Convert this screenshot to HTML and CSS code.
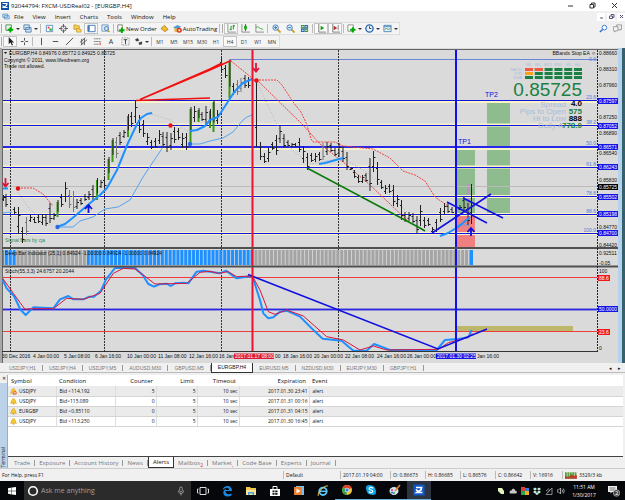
FILE: index.html
```html
<!DOCTYPE html>
<html lang="en">
<head>
<meta charset="utf-8">
<title>92044794: FXCM-USDReal02 - [EURGBP,H4]</title>
<link rel="stylesheet" href="styles.css">
</head>
<body>
<header class="titlebar">
  <svg class="logo" viewBox="0 0 16 16"><rect width="16" height="16" fill="#0a50a8"/><path d="M3 3h9l-1 4-6 4h8M3 7l4 5" fill="none" stroke="#fff" stroke-width="2.4"/></svg>
  <span class="title">92044794: FXCM-USDReal02 - [EURGBP,H4]</span>
  <div class="winctl">
    <button aria-label="Minimize"><svg viewBox="0 0 7 7"><path d="M1 4h5"/></svg></button>
    <button aria-label="Restore"><svg viewBox="0 0 7 7"><path d="M1 2.5h3.5V6H1zM2.5 2V1H6v4H5"/></svg></button>
    <button aria-label="Close"><svg viewBox="0 0 7 7"><path d="M1 1l5 5M6 1L1 6"/></svg></button>
  </div>
</header>
<nav class="menubar">
  <svg class="menuicon" viewBox="0 0 10 8"><path d="M1 1h6v4H1zM3 3h6v4H3z" fill="#dceaf8" stroke="#5590c8"/></svg>
  <button>File</button><button>View</button><button>Insert</button><button>Charts</button><button>Tools</button><button>Window</button><button>Help</button>
  <div class="mdictl">
    <button aria-label="Minimize chart"><svg viewBox="0 0 7 7"><path d="M2 5h3"/></svg></button>
    <button aria-label="Restore chart"><svg viewBox="0 0 7 7"><path d="M1.5 3h3v2.5h-3zM3 2.5v-1h3v3H5"/></svg></button>
    <button aria-label="Close chart"><svg viewBox="0 0 7 7"><path d="M2 2l3 3M5 2L2 5"/></svg></button>
  </div>
</nav>
<div class="toolbar">
  <div class="group">
    <i class="grip"></i>
    <button class="drop" aria-label="New chart"><svg viewBox="0 0 10 10"><path d="M1 1h6v6H1z" fill="#eef6ee" stroke="#4a8a4a"/><path d="M6 3.5v6M3 6.5h6" stroke="#0a0" stroke-width="2.2"/></svg></button>
    <button class="drop" aria-label="Profiles"><svg viewBox="0 0 10 10"><path d="M1 1h6v5H1zM3 4h6v5H3z" fill="#d8e8f6" stroke="#4a80b0"/></svg></button>
    <i class="sep"></i>
    <button aria-label="Market watch"><svg viewBox="0 0 10 10"><path d="M1.5 1.5h7v7h-7z" fill="#fff" stroke="#5a90c0"/><path d="M3 3h2v2H3z" fill="#e33"/><path d="M5 5h2.500v2.500H5z" fill="#2a2"/></svg></button>
    <button aria-label="Data window"><svg viewBox="0 0 10 10"><circle cx="5" cy="5" r="3" fill="none" stroke="#555"/><path d="M5 0v4M5 6v4M0 5h4M6 5h4" stroke="#555"/></svg></button>
    <button aria-label="Navigator"><svg viewBox="0 0 10 10"><path d="M1 1h3l1 1h2v4H1z" fill="#f4cd58" stroke="#b88a18" stroke-width=".7"/><path d="M4 5h2l1 1h2v3H4z" fill="#fbd85f" stroke="#b88a18" stroke-width=".7"/></svg></button>
    <button class="on" aria-label="Terminal"><svg viewBox="0 0 10 10"><path d="M1 1.500h8v7H1z" fill="#fff" stroke="#3d78b4"/><path d="M1 2h2v6H1z" fill="#3d78b4"/></svg></button>
    <button aria-label="Strategy tester"><svg viewBox="0 0 10 10"><path d="M1 1h7v7H1z" fill="#e2effa" stroke="#6a98c4"/><circle cx="6" cy="5" r="2.200" fill="#cfe4f8" stroke="#4377aa"/><path d="M7.500 7L9.500 9" stroke="#c79a2a" stroke-width="1.500"/></svg></button>
    <i class="sep"></i>
    <button class="wide"><svg viewBox="0 0 10 10"><path d="M2 1h5v7H2z" fill="#fff" stroke="#777"/><path d="M6.500 4v6M3.500 7h6" stroke="#0a0" stroke-width="2.200"/></svg>New Order</button>
    <button aria-label="MetaEditor"><svg viewBox="0 0 10 10"><path d="M1 5l4-3.500L9 6 5.500 8.500z" fill="#f0bd3a" stroke="#a87410" stroke-width=".8"/></svg></button>
    <button class="wide"><svg viewBox="0 0 10 10"><path d="M0 4l5-3 4 2-4 3z" fill="#4d9cd8"/><path d="M1 5h6v4H2z" fill="#e8b848"/><circle cx="7" cy="7" r="2.800" fill="#e03020"/><path d="M6 6h2v2H6z" fill="#fff"/></svg>AutoTrading</button>
    <i class="sep"></i><i class="grip"></i>
    <button class="on" aria-label="Bar chart"><svg viewBox="0 0 10 10"><path d="M1 0v9h9" fill="none" stroke="#888"/><path d="M4.500 2v5M3 6h1.500M7 1v5M7 2h2" stroke="#080" fill="none"/></svg></button>
    <button aria-label="Candlesticks"><svg viewBox="0 0 10 10"><path d="M1 0v9h9" fill="none" stroke="#888"/><path d="M5 0v8" stroke="#080"/><path d="M3.500 2h3v4h-3z" fill="#1a1"/></svg></button>
    <button aria-label="Line chart"><svg viewBox="0 0 10 10"><path d="M1 0v9h9" fill="none" stroke="#888"/><path d="M1 4l2-1 3 2 3 1" fill="none" stroke="#3a3"/></svg></button>
    <i class="sep"></i>
    <button aria-label="Zoom in"><svg viewBox="0 0 10 10"><path d="M6 6l3.500 3.500" stroke="#c79a2a" stroke-width="2"/><circle cx="4" cy="4" r="3" fill="#d8ecff" stroke="#3d78b4"/><path d="M4 2.500v3M2.500 4h3" stroke="#26a"/></svg></button>
    <button aria-label="Zoom out"><svg viewBox="0 0 10 10"><path d="M6 6l3.500 3.500" stroke="#c79a2a" stroke-width="2"/><circle cx="4" cy="4" r="3" fill="#d8ecff" stroke="#3d78b4"/><path d="M2.500 4h3" stroke="#26a"/></svg></button>
    <button aria-label="Tile windows"><svg viewBox="0 0 10 10"><path d="M1 1h4v4H1zM5 5h4v4H5z" fill="#3a9a3a"/><path d="M5 1h4v4H5zM1 5h4v4H1z" fill="#2d68b0"/><path d="M2 3h2M6 3h2M2 7h2M6 7h2" stroke="#fff"/></svg></button>
    <i class="sep"></i>
    <button class="on" aria-label="Auto scroll"><svg viewBox="0 0 10 10"><path d="M2 0v9h8" fill="none" stroke="#777"/><path d="M4 2l4 2.500L4 7z" fill="#1a9a1a"/></svg></button>
    <button class="on" aria-label="Chart shift"><svg viewBox="0 0 10 10"><path d="M2 0v9h8M8 1v6" fill="none" stroke="#777"/><path d="M3 2l4 2.500L3 7z" fill="#b03030"/></svg></button>
    <i class="sep"></i>
    <button class="drop" aria-label="Indicators"><svg viewBox="0 0 10 10"><path d="M1 1h6v7H1z" fill="#fff" stroke="#888"/><path d="M6.500 3.500v6M3.500 6.500h6" stroke="#0a0" stroke-width="2.200"/></svg></button>
    <button class="drop" aria-label="Periods"><svg viewBox="0 0 10 10"><circle cx="5" cy="5" r="4" fill="#e8f2fc" stroke="#2766b0" stroke-width="1.500"/><path d="M5 2.500V5h2" fill="none" stroke="#333"/></svg></button>
    <button class="drop" aria-label="Templates"><svg viewBox="0 0 10 10"><path d="M1 1.500h8v7H1z" fill="#e6f0fa" stroke="#4e86b8"/><path d="M1 3h8" stroke="#4e86b8"/><path d="M2 6l2-1 2 1 2-1" fill="none" stroke="#3a3"/></svg></button>
  </div>
  <div class="right">
    <button aria-label="Search"><svg viewBox="0 0 10 10"><circle cx="6" cy="4" r="2.600" fill="#fff" stroke="#2f6fd0"/><path d="M4 6L1 9" stroke="#2f6fd0" stroke-width="1.600"/></svg></button>
    <button aria-label="Chat"><svg viewBox="0 0 10 10"><path d="M4 1h5.500v5H8v1L6.500 6H4z" fill="#eee" stroke="#999"/><path d="M.5 3h5v4.500H3L2 9V7.500H.5z" fill="#f6f6f6" stroke="#999"/></svg></button>
  </div>
</div>
<div class="toolbar">
  <div class="group tools">
    <i class="grip"></i>
    <button class="on" aria-label="Cursor"><svg viewBox="0 0 10 10"><path d="M3 0v8l2-2 1.500 3.500 1.300-.6L6.300 6H9z" fill="#222"/></svg></button>
    <button aria-label="Crosshair"><svg viewBox="0 0 10 10"><path d="M5 1v3M5 6v3M1 5h3M6 5h3" stroke="#444"/></svg></button>
    <i class="sep"></i>
    <button aria-label="Vertical line"><svg viewBox="0 0 10 10"><path d="M5 1v8" stroke="#444"/></svg></button>
    <button aria-label="Horizontal line"><svg viewBox="0 0 10 10"><path d="M2 5h6" stroke="#444"/></svg></button>
    <button aria-label="Trendline"><svg viewBox="0 0 10 10"><path d="M1 9l8-8" stroke="#444"/></svg></button>
    <button aria-label="Channel"><svg viewBox="0 0 10 10"><path d="M1 6l6-5M2 9l7-6M3 2v7M6 1v8" stroke="#555"/></svg></button>
    <button aria-label="Fibonacci"><svg viewBox="0 0 10 10"><path d="M1 2h8M1 5h8M1 8h6" stroke="#777" stroke-dasharray="2 .5"/><path d="M8 6v3" stroke="#c33"/></svg></button>
    <button class="letter">A</button>
    <button aria-label="Text label"><svg viewBox="0 0 10 10"><path d="M1 1h8v8H1z" fill="none" stroke="#777" stroke-dasharray="1 1"/><path d="M3 3h4M5 3v5" stroke="#333"/></svg></button>
    <button class="drop" aria-label="Arrows"><svg viewBox="0 0 10 10"><path d="M1 3l3-2 2 3-3 1zM5 6l4-1v3l-3 1z" fill="#444"/></svg></button>
    <i class="sep"></i>
    <button>M1</button><button>M5</button><button>M15</button><button>M30</button><button>H1</button><button class="on">H4</button><button>D1</button><button>W1</button><button>MN</button>
  </div>
</div>

<main class="chart">
<svg viewBox="0 48 625 315">
  <defs>
    <pattern id="stripe" width="3.900" height="20" patternUnits="userSpaceOnUse"><path d="M.5 0v20" stroke="#dedede" stroke-width=".8"/></pattern>
  </defs>
  <rect y="48" width="625" height="315" fill="#dadada"/>
  <path d="M0 49.500h618M2.500 49v314" stroke="#666" fill="none"/>
  <path d="M1 48v315" stroke="#a8a8a8" stroke-width="2"/>
  <rect x="618" y="48" width="4" height="315" fill="#b4d2ec"/>
  <rect x="622" y="48" width="3" height="315" fill="#35606c"/>

  <rect x="457" y="146" width="18" height="69" fill="#8fbc8f"/>
  <rect x="457" y="215" width="18" height="33" fill="#f08080"/>
  <rect x="487" y="101" width="23" height="112" fill="#8fbc8f"/>
  <rect x="467" y="184" width="3" height="31" fill="#c08fc4"/>
  <rect x="457" y="326" width="116" height="6" fill="#bdb76b"/>

  <path class="halo" d="M3 101.500h594M3 125h594M3 148.500h594M3 167h594M3 196.500h594M3 214.500h594M3 233.500h594M3 309.500h594"/>
  <path d="M3 186.500h594" stroke="#bbb"/>
  <path d="M229 59.500h368" stroke="#6a86d8"/>
  <path d="M10.500 50v301M104.500 50v301M221.500 50v301M338.500 50v301" stroke="#333" stroke-dasharray="2 1"/>
  <g class="txt">
    <path d="M4 52h3l-1.500 2z"/>
    <text x="9" y="55">EURGBP,H4 0.84976 0.85772 0.84925 0.85725</text>
    <text x="4" y="62">Copyright © 2011, www.lifesdream.org</text>
    <text x="4" y="68">Trade not allowed.</text>
    <text x="5" y="242" fill="#2e8b57">Signal Bars by cja</text>
  </g>
  <path d="M3 100.500h594M3 125.500h594M3 167.500h594M3 196.500h594M3 214.500h594M3 233.500h594" stroke="#1414e6"/>
  <path d="M3 147h594M3 309.500h594" stroke="#2828e8" stroke-width="2"/>
  <path d="M3 277.500h594M3 331.500h594" stroke="#f03c3c"/>

  <rect x="3" y="250" width="13" height="15" fill="#1e90ff"/>
  <rect x="16" y="250" width="71" height="15" fill="#a4a4a4"/>
  <rect x="87" y="250" width="165" height="15" fill="#1e90ff"/>
  <rect x="253" y="250" width="217" height="15" fill="#a4a4a4"/>
  <rect x="3" y="250" width="468" height="15" fill="url(#stripe)"/>
  <rect x="470" y="250" width="3" height="15" fill="#1e90ff"/>
  <g class="txt">
    <text x="5" y="255">Deep Bar Indicator (25,1) 0.84924 -1.00000 0.84924 -1.00000 0.84924</text>
    <text x="5" y="273">Stoch(55,3,3) 24.6757 20.2044</text>
  </g>

  <g class="dotred">
    <path d="M18 188h15l10 6 10 12M231 61l21 17M253 80h24l5 5 11 17 8 10 6 13 4 14 2 3h22l8 4 30 3 17 9 13 13 12 4 10 6 10 16 13 9"/>
    <path d="M257 80l45 44 18 20 23 18 27 23 40 38"/>
  </g>
  <path class="dotgray" d="M18 192l12 18 22 16M152 114l18 6 19 12M257 82l20 43 13 23 20 16 33-6 25 15 40 40"/>
  <path class="ma thin" d="M3 213l9-1M57 227h16l7-6 13-4 12-8 13-2 12-7 13-23 20-30M190 144h10l10-3 13-3 10-6 10-12 4-3 5-2M455 225h14"/>
  <g id="candles"></g>
  <path class="ma" d="M3 188.500h5M57 227l8-3 10-8 14-12 11-9 7-7 10-18 11-27 9-19 4-6 6-4 5-1M190 131l7-1 8-4 5-6 8-3 11-17 6-9 8-8 9-4M319 164l6-1 18-5M440 236l8-3 10-6 12-10"/>
  <g fill="none" stroke="#f01010" stroke-width="1.500"><path d="M140 99.500L210 69l12-6M140 99.500L210 70l21-9.500M136 100.500l74-2.500"/></g>
  <path d="M307 168l113 60 5 3" fill="none" stroke="#0a7a0a" stroke-width="1.500"/>
  <g stroke="#1010e0" stroke-width="1.500"><path d="M432 233l59-39M447 202l40 21M463 198l40 20"/></g>
  <g fill="#e81010"><circle cx="18" cy="188.500" r="2.200"/><circle cx="170.500" cy="125.500" r="2.200"/><circle cx="256.500" cy="80.500" r="2.200"/></g>
  <g fill="#2a6ae0"><circle cx="57.500" cy="227" r="2.200"/><circle cx="190" cy="144" r="2.200"/></g>
  <path d="M5.500 178v7M2.500 183l3 3.500 3-3.500M256 63v8M253 68l3 3.500 3-3.500" fill="none" stroke="#dc143c" stroke-width="1.800"/>
  <path d="M88.500 213v-7M85 209l3.500-4 3.500 4M471 236v-7M467.500 232l3.500-4 3.500 4" fill="none" stroke="#1010d8" stroke-width="1.800"/>

  <g transform="translate(0 240) scale(.33333)" fill="none" stroke-linejoin="round">
    <path class="stoch" d="M8 120L20 145 42 168 62 210 77 225 100 202 160 205 180 178 205 168 220 178 250 178 268 170 282 170 303 152 318 118 345 84 405 84 428 105 445 132 462 140 478 133 500 131 512 138 525 130 550 128 565 130 590 95 610 92 660 100 678 92 710 115 757 108 780 180 790 220 805 235 820 232 840 215 860 212 900 230 940 270 968 296 1025 302 1060 332 1100 332 1122 312 1150 322 1170 330 1310 330 1335 300 1375 297 1405 292 1415 270"/>
    <path class="signal" d="M8 115L40 160 75 208 100 206 160 206 200 175 250 178 300 160 340 100 370 85 405 87 430 105 465 132 560 130 600 97 630 94 655 100 685 95 710 110 757 108 780 150 805 215 825 223 860 210 910 228 980 290 1030 300 1080 330 1120 318 1160 330 1315 328 1345 308 1405 292 1417 280"/>
  </g>
  <path d="M248 274.500L438 349l49-20" fill="none" stroke="#1010e0" stroke-width="1.500"/>
  <path d="M252.500 50v301" stroke="#f01030" stroke-width="2"/>
  <path d="M456 50v301" stroke="#1010f0" stroke-width="2"/>
  <path d="M2 248h616M2 266.500h616" stroke="#505050" stroke-width="2"/>
  <path d="M2 351.500h596" stroke="#333"/>
  <path d="M597.500 50v301" stroke="#222" stroke-dasharray="2 1"/>

  <text class="tp" x="485" y="97">TP2</text><text class="tp" x="458" y="144">TP1</text>
  <text class="txt end" x="596" y="55">BBands Stop EA ☺</text>
  <g class="faint sm"><text x="526" y="66">M1</text><text x="535" y="66">M5</text><text x="544" y="66">M15</text><text x="554" y="66">M30</text><text x="566" y="66">H1</text><text x="575" y="66">H4</text>
    <text class="end" x="522" y="71">MACD</text><text class="end" x="522" y="75">STR</text><text class="end" x="522" y="79">EMA</text></g>
  <g fill="none" stroke-width="3" stroke-dasharray="8 1.800">
    <path d="M525 69.500h57M525 73.500h57M525 77.500h57" stroke="#1a8044"/>
    <path d="M525 69.500h18" stroke="#f4583c"/><path d="M525 73.500h8" stroke="#f8a018"/></g>
  <text class="price" x="582" y="96">0.85725</text>
  <g class="faint mid end"><text x="566" y="107">Spread</text><text x="566" y="114">Pips to Open</text><text x="566" y="121">Hi to Low</text><text x="563" y="128">Daily A</text></g>
  <g class="val end"><text x="582" y="106">4.0</text><text class="g" x="582" y="114">575</text><text x="582" y="121">888</text><text class="g" x="582" y="128">778.0</text></g>
  <g class="fib end"><text x="596" y="61">0.0</text><text x="596" y="99">23.6</text><text x="596" y="124">38.2</text><text x="596" y="145">50.0</text><text x="596" y="166">61.8</text><text x="596" y="195">78.6</text><text x="596" y="213">88.6</text><text x="596" y="232">100.0</text></g>

  <g id="axis" class="txt"></g>
  <g class="txt">
    <text x="2" y="358">30 Dec 2016</text><text x="33" y="358">4 Jan 00:00</text><text x="64" y="358">5 Jan 08:00</text><text x="95" y="358">6 Jan 16:00</text><text x="127" y="358">10 Jan 00:00</text><text x="158" y="358">11 Jan 08:00</text><text x="189" y="358">12 Jan 16:00</text><text x="219" y="358">16 Jan</text><text x="275" y="358">00</text><text x="283" y="358">18 Jan 16:00</text><text x="314" y="358">20 Jan 00:00</text><text x="345" y="358">22 Jan 08:00</text><text x="377" y="358">24 Jan 16:00</text><text x="407" y="358">26 Jan 00:00</text><text x="477" y="358">Jan 16:00</text>
    <rect x="234" y="353.500" width="40" height="5.500" fill="#e01838"/><text x="235" y="358" class="w">2017.01.17 08:00</text>
    <rect x="436" y="353.500" width="40" height="5.500" fill="#1414e6"/><text x="437" y="358" class="w">2017.01.30 02:25</text>
  </g>
</svg>
</main>

<nav class="tabs charttabs">
  <a href="#">USDJPY,H1</a><a href="#">USDJPY,H4</a><a href="#">USDJPY,M5</a><a href="#">AUDUSD,M30</a><a href="#">GBPUSD,M5</a><a href="#" class="active">EURGBP,H4</a><a href="#">EURUSD,M5</a><a href="#">NZDUSD,M30</a><a href="#">EURJPY,M30</a><a href="#">GBPJPY,H1</a>
  <span class="arrows"><span>◂</span><span>▸</span></span>
</nav>

<section class="terminal">
  <aside><button aria-label="Close terminal">✕</button><span>Terminal</span></aside>
  <div class="panel">
    <table>
      <colgroup><col class="c1"><col class="c2"><col class="c3"><col class="c4"><col class="c5"><col class="c6"><col></colgroup>
      <thead><tr><th>Symbol</th><th>Condition</th><th class="r">Counter</th><th class="r">Limit</th><th class="r">Timeout</th><th class="r">Expiration</th><th>Event</th></tr></thead>
      <tbody>
        <tr><td><svg viewBox="0 0 8 8"><use href="#bell"/><circle cx="5.500" cy="5.500" r="2.200" fill="#e8603c"/><path d="M4.300 5.500h2.400" stroke="#fff"/></svg>USDJPY</td><td>Bid &lt;114.192</td><td class="r">5</td><td class="r">5</td><td class="r">10 sec</td><td class="r">2017.01.30 23:41</td><td>alert</td></tr>
        <tr><td><svg viewBox="0 0 8 8"><g id="bell"><path d="M.5 6l1-1.200C1.800 2 2.500 1 4 .8 5.500 1 6.200 2 6.500 4.800L7.500 6z" fill="#f8c830" stroke="#c89010" stroke-width=".6"/><circle cx="4" cy="6.800" r=".9" fill="#d89810"/></g></svg>USDJPY</td><td>Bid&gt;115.089</td><td class="r">0</td><td class="r">5</td><td class="r">10 sec</td><td class="r">2017.01.31 00:16</td><td>alert</td></tr>
        <tr><td><svg viewBox="0 0 8 8"><use href="#bell"/></svg>EURGBP</td><td>Bid &lt;0.85110</td><td class="r">0</td><td class="r">5</td><td class="r">10 sec</td><td class="r">2017.01.31 04:15</td><td>alert</td></tr>
        <tr><td><svg viewBox="0 0 8 8"><use href="#bell"/></svg>USDJPY</td><td>Bid &lt;113.250</td><td class="r">0</td><td class="r">5</td><td class="r">10 sec</td><td class="r">2017.01.30 16:45</td><td>alert</td></tr>
      </tbody>
    </table>
    <nav class="tabs termtabs">
      <a href="#">Trade</a><a href="#">Exposure</a><a href="#">Account History</a><a href="#">News</a><a href="#" class="active">Alerts</a><a href="#">Mailbox<sub>2</sub></a><a href="#">Market<sub>,</sub></a><a href="#">Code Base</a><a href="#">Experts</a><a href="#">Journal</a>
    </nav>
  </div>
</section>

<footer class="status">
  <span class="help">For Help, press F1</span><span class="s57">Default</span><span class="s50">2017.01.19 04:00</span><span>O: 0.86673</span><span>H: 0.86685</span><span>L: 0.86576</span><span>C: 0.86642</span><span class="s32">V: 16916</span>
  <span class="s63"><svg viewBox="0 0 13 7"><path d="M0 3.500h13" stroke="#5aa040" stroke-width="7" stroke-dasharray="2 .6"/><path d="M0 7h13V3L9 4 7 2 4 5 0 4z" fill="#c03020" opacity=".85"/></svg>3329/3 kb</span>
</footer>

<div class="taskbar">
  <button class="start" aria-label="Start"><svg viewBox="0 0 8 8"><path d="M0 1.200L3.600.6v3.200H0zM4 .5L8 0v3.800H4zM0 4.200h3.600v3.200L0 6.800zM4 4.200h4V8l-4-.5z" fill="#fff"/></svg></button>
  <label class="search"><svg viewBox="0 0 12 12"><circle cx="6" cy="6" r="4.300" fill="none" stroke="#fff" stroke-width="1.600"/></svg><input type="text" placeholder="Ask me anything" aria-label="Search"><svg class="mic" viewBox="0 0 8 10"><rect x="2.700" y="1" width="2.600" height="5" rx="1.300" fill="none" stroke="#aaa" stroke-width=".8"/><path d="M1.300 4.500c0 4 5.400 4 5.400 0M4 7.500V9.500" fill="none" stroke="#aaa" stroke-width=".8"/></svg></label>
  <button aria-label="Task view"><svg viewBox="0 0 12 12"><path d="M3 2.500h6v7H3zM1.500 4H.5v4h1M10.500 4h1v4h-1" fill="none" stroke="#ddd"/></svg></button>
  <button aria-label="Edge"><svg viewBox="0 0 12 12"><path d="M1.500 5.500C2.500-.5 11-.5 11 6H4.500c0 3.500 3.500 4 6 2.500v2C5.500 13 1.500 10.500 2.500 6.500 3 5 4 4 5.500 3.500 4.800 4 4.500 4.400 4.500 5H8c0-3-4-3-6.500.5z" fill="#1e88e0"/></svg></button>
  <button aria-label="File Explorer"><svg viewBox="0 0 12 12"><path d="M1 2h4l1 1h5v7H1z" fill="#f2c94c"/><path d="M1 5h10v5H1z" fill="#fbe39a"/><path d="M3 10V7h6v3H7.500V8.500h-3V10z" fill="#4aa3df"/></svg></button>
  <button aria-label="Store"><svg viewBox="0 0 12 12"><path d="M1 4h10v7H1z" fill="#fff"/><path d="M4 4V1.500h4V4" fill="none" stroke="#fff"/><path d="M3.500 5.500h2v1.800h-2zM6.200 5.500h2.300v1.800H6.200zM3.500 8h2v1.800h-2zM6.200 8h2.300v1.800H6.200z" fill="#111"/></svg></button>
  <button aria-label="Media player"><svg viewBox="0 0 12 12"><path d="M3 1h8v9H3z" fill="#7fc0e8"/><rect x="1" y="2" width="8" height="8" fill="#f08030"/><path d="M3.500 3.500L7.500 6l-4 2.500z" fill="#fff"/></svg></button>
  <button aria-label="Internet Explorer"><svg viewBox="0 0 12 12"><circle cx="6" cy="6.300" r="3.700" fill="none" stroke="#5cc4f4" stroke-width="1.900"/><path d="M3 6.300h7" stroke="#5cc4f4" stroke-width="1.500"/><path d="M1.500 11C-1 8 9-1.500 11 1.500" fill="none" stroke="#f4d040"/></svg></button>
  <button class="run" aria-label="Chrome"><svg viewBox="0 0 12 12"><circle cx="6" cy="6" r="5" fill="#f4c430"/><path d="M6 6L1.700 3.500A5 5 0 0 1 10.600 4z" fill="#e04030"/><path d="M6 6L1.700 3.500A5 5 0 0 0 5.500 11z" fill="#34a050"/><circle cx="6" cy="6" r="2.200" fill="#fff"/><circle cx="6" cy="6" r="1.700" fill="#3c7ce8"/></svg></button>
  <button class="run" aria-label="Skype"><svg viewBox="0 0 12 12"><circle cx="4" cy="4" r="3" fill="#10a8ec"/><circle cx="8" cy="8" r="3" fill="#10a8ec"/><circle cx="6" cy="6" r="4.500" fill="#10a8ec"/><path d="M8 4.300C7 3 4 3.200 4.200 4.800 4.500 6.500 8 5.500 7.800 7.500 7.500 9 4.500 9 4 7.500" fill="none" stroke="#fff" stroke-width="1.200"/></svg></button>
  <button class="run" aria-label="Paint"><svg viewBox="0 0 12 12"><ellipse cx="5" cy="7" rx="4.500" ry="4" fill="#d4e4f2"/><circle cx="3" cy="6" r="1" fill="#e04040"/><circle cx="5" cy="9" r="1" fill="#30a040"/><circle cx="3" cy="8.500" r="1" fill="#3060e0"/><path d="M11 1L6 7" stroke="#d88a30" stroke-width="1.600"/></svg></button>
  <button class="run cur" aria-label="Trading Station"><svg viewBox="0 0 12 12"><rect x=".5" y=".5" width="11" height="11" fill="#1058c8"/><path d="M3 3.500h5.500L8 6 4 8.500h5.500M3 5.500l3 3" fill="none" stroke="#fff" stroke-width="1.700"/></svg></button>
  <div class="tray">
    <svg viewBox="0 0 8 8"><path d="M1 1h4l2 3v3H4L1 4z" fill="#e4f4c0"/></svg>
    <svg viewBox="0 0 8 8"><path d="M1 6.500C-.5 4 2 3 2.500 3.500 3 1 6 1.500 6 3.500 8 3.500 8.500 6 7 6.500z" fill="#c8c8c8"/></svg>
    <svg viewBox="0 0 8 8"><path d="M0 0h4v4H0z" fill="#e04028"/><path d="M4 1h4v3H4z" fill="#3a78d8"/><path d="M0 4h4v4H0z" fill="#30a050"/><path d="M4 4h4v4H4z" fill="#f0b020"/></svg>
    <svg viewBox="0 0 8 8"><path d="M2 .5l2 1.500-2 1.500L0 2zM6 .5L8 2 6 3.500 4 2zM2 3.500L4 5 2 6.500 0 5zM6 3.500L8 5 6 6.500 4 5zM4 5.500l2 1.300L4 8 2 6.800z" fill="#c8f0d8"/></svg>
    <svg viewBox="0 0 8 8"><path d="M1 7.500L7 1v6.500zM1 4l3-2.500M2.500 5.500L5.500 2" fill="none" stroke="#aaa" stroke-width=".8"/></svg>
    <svg viewBox="0 0 8 8"><path d="M0 3h1.500l2-2v6l-2-2H0zM5 2.500q1 1.500 0 3M6.300 1.500q2 2.500 0 5" fill="none" stroke="#ddd" stroke-width=".7"/></svg>
    <time>11:51 AM<br>1/30/2017</time>
    <button class="notif" aria-label="Notifications"><svg viewBox="0 0 12 12"><path d="M0 1h9v6H4L2.500 8.500V7H0z" fill="#eee"/><path d="M1.500 3h6M1.500 5h6" stroke="#222" stroke-width=".6"/><circle cx="8.500" cy="8" r="3.300" fill="#444" stroke="#ccc" stroke-width=".6"/><text x="7" y="10" fill="#fff">2</text></svg></button>
  </div>
</div>
<script src="chart.js"></script>
</body>
</html>
```
FILE: styles.css
```css
* { box-sizing: border-box; }
body {
  margin: 0;
  min-height: 100vh;
  display: flex;
  flex-direction: column;
  background: #f0f0f0;
  color: #111;
  font: 5px/8px "Open Sans", "Liberation Sans", sans-serif;
}
button {
  border: 0;
  padding: 0;
  margin: 0;
  background: none;
  color: inherit;
  font: inherit;
  display: flex;
  align-items: center;
  justify-content: center;
}
svg { display: block; flex: none; }

.titlebar { height: 11px; display: flex; align-items: center; background: #fff; padding-left: 1px; font-size: 6px; }
.logo { width: 8px; height: 8px; margin-right: 2px; }
.winctl { margin-left: auto; display: flex; }
.winctl button { width: 22px; }
.winctl svg { width: 7px; height: 7px; fill: none; stroke: #333; }

.menubar { height: 11px; display: flex; align-items: center; gap: 9px; padding-left: 2px; font-size: 6px; }
.menuicon { width: 8px; height: 7px; margin-right: -5px; }
.mdictl { margin-left: auto; display: flex; gap: 2px; }
.mdictl button { width: 8px; height: 8px; background: #fff; }
.mdictl svg { width: 7px; height: 7px; fill: none; stroke: #557; }

.toolbar { height: 13px; display: flex; justify-content: space-between; }
.group { display: flex; align-items: center; border: 1px solid #ddd; border-left: 0; background: #f4f4f4; font-size: 6px; }
.group button { width: 14px; height: 11px; }
.group svg, .right svg { width: 9px; height: 9px; fill: none; }
.group .on { background: #fafafa; border: 1px solid #c4c4c4; }
.group .drop { width: 18px; gap: 2px; }
.drop::after { content: ""; border: 2px solid transparent; border-top-color: #333; border-bottom: 0; }
.group .wide { width: auto; gap: 1px; padding: 0 1px; }
.tools { font-size: 5px; color: #333; }
.tools .letter { font-size: 7px; }
.grip { width: 1px; height: 9px; margin: 0 1px; background: #aaa; }
.sep { width: 1px; height: 9px; margin: 0 1px; background: #bbb; }
.right { display: flex; gap: 5px; padding-right: 3px; }

.chart svg { width: 100%; height: auto; }
.halo { stroke: #f8f4c8; stroke-width: 3; }
.txt { font: 5px "Liberation Sans", sans-serif; fill: #111; }
.txt .w { fill: #fff; }
.tp { font: 7px "Liberation Sans", sans-serif; fill: #1010e0; }
.sm { font: 4px "Liberation Sans", sans-serif; }
.mid { font: 8px "Liberation Sans", sans-serif; }
.faint { fill: #a8bcd8; }
.price { font: 19px "Liberation Sans", sans-serif; fill: #1a8044; text-anchor: end; }
.val { font: bold 8px "Liberation Sans", sans-serif; }
.g { fill: #1a8044; }
.fib { font: 5px "Liberation Sans", sans-serif; fill: #5878d8; }
.end { text-anchor: end; }
.dotred { fill: none; stroke: #f04040; stroke-dasharray: 2 1; }
.dotgray { fill: none; stroke: #b0b0b0; stroke-dasharray: 1 2; }
.ma { fill: none; stroke: #1e90ff; stroke-width: 2; stroke-linejoin: round; }
.ma.thin { stroke-width: 1; stroke: #58a4ec; }
.stoch { stroke: #1e90ff; stroke-width: 6; }
.signal { stroke: #dc143c; stroke-width: 3; }
.bar { fill: none; stroke: #222; }
.bar.up { stroke: #3c9a14; stroke-width: 2; }
.bar.dim { stroke: #777; }

.tabs { display: flex; align-items: center; background: #f0f0f0; }
.tabs a { color: #777; text-decoration: none; white-space: nowrap; border-right: 1px solid #999; line-height: 6px; }
.tabs a.active { background: #fff; color: #111; border: 1px solid #333; border-top: 0; }
.charttabs { height: 10px; padding-left: 3px; border-bottom: 1px solid #bbb; font-family: "Liberation Sans", sans-serif; }
.charttabs a { padding: 0 6px; }
.charttabs a.active { line-height: 9px; }
.arrows { margin-left: auto; padding-right: 4px; display: flex; gap: 6px; }

.terminal { flex: 1; display: flex; border-top: 2px solid #f0f0f0; }
.terminal aside { width: 7px; display: flex; flex-direction: column; justify-content: space-between; align-items: center; background: linear-gradient(#f0f0f0 8px, #bcd2e8 8px); }
.terminal aside button { height: 6px; }
.terminal aside span { writing-mode: vertical-rl; transform: rotate(180deg); line-height: 7px; }
.panel { flex: 1; display: flex; flex-direction: column; justify-content: space-between; background: #fff; border-left: 1px solid #aaa; margin-right: 2px; }
table { width: 100%; table-layout: fixed; border-collapse: collapse; }
th { height: 11px; font-weight: 400; font-size: 6px; text-align: left; padding: 0 3px; }
td { height: 10px; padding: 0 3px; border-right: 1px solid #ddd; border-bottom: 1px solid #d4d4d4; white-space: nowrap; }
td:last-child { border-right: 0; }
td.r { padding-right: 1px; }
.r { text-align: right; }
td svg { width: 7px; height: 7px; display: inline-block; vertical-align: middle; margin: 0 2px 0 -1px; }
tbody tr:nth-child(odd) { background: #ebebeb; }
.c1 { width: 48px; } .c2 { width: 59px; } .c3 { width: 41px; } .c4 { width: 41px; } .c5 { width: 42px; } .c6 { width: 70px; }
.termtabs { height: 12px; border-top: 1px solid #444; padding-left: 2px; font-size: 6px; }
.termtabs a { padding: 0 4px; }
.termtabs a.active { line-height: 10px; margin-top: -1px; }
sub { color: #e02020; font-size: 5px; line-height: 0; }

.status { height: 13px; display: flex; align-items: center; border-top: 1px solid #ccc; }
.status span { width: 35px; padding-left: 2px; border-left: 1px solid #bbb; white-space: nowrap; }
.status .help { flex: 1; border: 0; }
.status .s57 { width: 57px; }
.status .s50 { width: 50px; }
.status .s32 { width: 32px; }
.status .s63 { width: 63px; display: flex; align-items: center; gap: 2px; }
.status svg { width: 12px; height: 7px; }

.taskbar { height: 19px; display: flex; background: #05070a; color: #fff; }
.taskbar > button { width: 24px; }
.taskbar svg { width: 12px; height: 12px; }
.taskbar .start svg { width: 8px; height: 8px; }
.search { width: 167px; display: flex; align-items: center; gap: 2px; padding: 0 6px 0 3px; background: #2b2b2b; }
.search input { flex: 1; min-width: 0; padding: 0; border: 0; background: none; color: #ccc; font: 7px "Open Sans", sans-serif; outline: 0; }
.search input::placeholder { color: #a0a0a0; opacity: 1; }
.taskbar .mic { width: 8px; height: 10px; }
.taskbar .run { border-bottom: 1px solid #6cb0e0; }
.taskbar .cur { background: #2c3440; }
.tray { margin-left: auto; display: flex; align-items: center; gap: 4px; }
.taskbar .tray > svg { width: 8px; height: 8px; }
.tray time { width: 30px; text-align: center; }
.notif { width: 22px; }
.notif text { font: 6px "Open Sans", sans-serif; }
```
FILE: chart.js
```js
const NS = "http://www.w3.org/2000/svg";
function add(parent, tag, attrs, text) {
  const el = document.createElementNS(NS, tag);
  for (const k in attrs) el.setAttribute(k, attrs[k]);
  if (text) el.textContent = text;
  parent.appendChild(el);
}

// Each bar: x, high, low, kind ("u" rising, "d" muted).
const bars = `3.5 195 201;6 194 207;14.5 207 214;18.5 207 234;22.5 227 243;26.5 217 235 d;30.5 215 222;34.5 217 223;38.5 215 223;42.5 214 225;46 214 226;50 203 223;54 213 220;57.5 200 217 u;61.5 194 207;65.5 182 202;69.5 190 208 d;73.5 191 212 d;77 199 209;81 198 205;85 194 201;89 191 200;93 185 200;97 178 200 u;101 180 188;104.5 177 188;108.5 157 180 u;112.5 138 162 u;116.5 137 158 d;120 132 145;124 130 138;128 114 137 u;131.5 112 127;135.5 100 123;139.5 115 133;143.5 120 137;147.5 133 145;151.5 140 149;155.5 138 148;159.5 130 144;163 132 148;167 132 152;171 133 150;174.5 127 143;178.5 128 140;182.5 133 148;186.5 133 150;190.5 107 143 u;194.5 106 122;198.5 108 122 u;202 112 121;206 106 125;210 109 128 u;213.5 100 132 u;217.5 110 124;221.5 58 73;225.5 65 78;229.5 60 98 u;233.5 83 95;237.5 80 95 d;241 78 92 d;245 75 88;248.5 77 88;256.5 80 147;260.5 142 160;264.5 153 163;268.5 148 162;272.5 142 150;276.5 135 155;280 126 143;284 134 148;288 140 147;292 143 147;295.5 143 147;299.5 138 152;303.5 146 163;307.5 153 170;311.5 153 162;315.5 153 162;319.5 152 161;323 143 160 d;327 142 155;331 143 152;335 148 156;339 143 157;343 147 162;347 152 170;351 167 170;354.5 170 178;358.5 175 183;362.5 175 183;366 173 182;370 158 191;373.5 151 172;377.5 162 185;381.5 180 189;385.5 185 194;389.5 184 193;393.5 185 206;397.5 195 207;401.5 200 220;405 212 222;409 212 221;413 213 223;417 216 233;420.5 205 226;424.5 217 228;428.5 218 226;432.5 227 233;436.5 219 232;440.5 208 222;444.5 203 214;448 203 213;452 207 213;460 205 210;464 197 210;468 203 225;471.5 184 224`.split(";");
const g = document.getElementById("candles");
bars.forEach((row, i) => {
  const [x, hi, lo, kind] = row.trim().split(" ");
  const h = +hi, l = +lo, span = l - h;
  const open = h + span * (i % 3 ? 0.25 : 0.7), close = h + span * (i % 3 ? 0.75 : 0.3);
  if (kind === "u") add(g, "path", { class: "bar up", d: `M${x} ${h + 2}V${l}` });
  add(g, "path", {
    class: "bar" + (kind === "d" ? " dim" : ""),
    d: kind === "u"
      ? `M${+x + 0.5} ${h}v${span * 0.7}`
      : `M${x} ${h}V${l}M${+x - 1.5} ${Math.round(open)}.5H${x}M${x} ${Math.round(close)}.5h2`
  });
});

const axis = document.getElementById("axis");
const labels = [
  [53, "0.88660"], [69, "0.88310"], [85, "0.87960"], [117, "0.87250"], [133, "0.86890"],
  [153, "0.86540"], [180, "0.85830"], [227, "0.84770"], [245, "0.84420"], [253, "0.92511"],
  [263, "-0.05"], [271, "100"], [348, "0"],
  [101, "0.87597", "#1414e6"], [126, "0.87052", "#1414e6"], [147, "0.86571", "#1414e6"],
  [167, "0.86243", "#1414e6"], [187, "0.85725", "#000"], [197, "0.85502", "#1414e6"],
  [214, "0.85198", "#1414e6"], [233, "0.84700", "#1414e6"],
  [278, "88.6", "#f01818", 12], [309, "50.0000", "#1414e6"], [332, "23.6", "#f01818", 12]
];
for (const [y, text, fill, w] of labels) {
  if (fill) add(axis, "rect", { x: 598, y: y - 3, width: w || 20, height: 6, fill });
  add(axis, "text", { x: 599, y: y + 2, class: fill ? "w" : "" }, text);
}
```
